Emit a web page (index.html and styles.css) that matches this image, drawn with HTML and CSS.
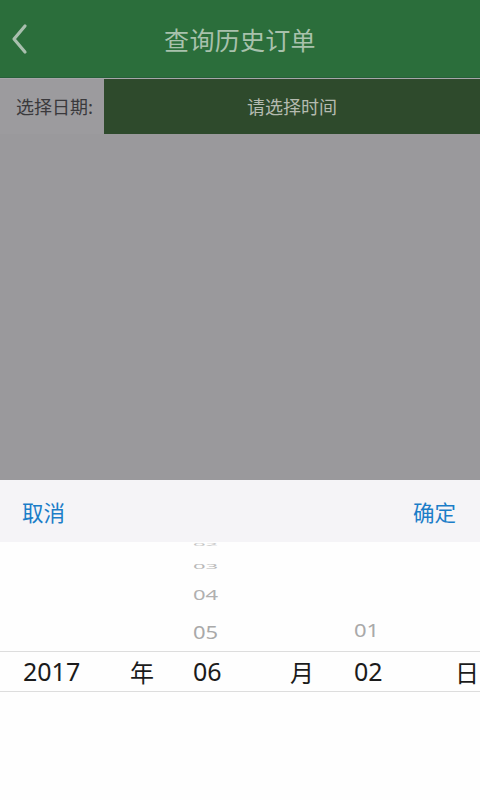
FILE: index.html
```html
<!DOCTYPE html>
<html lang="zh">
<head>
<meta charset="utf-8">
<title>查询历史订单</title>
<link rel="stylesheet" href="styles.css">
</head>
<body>
<div class="screen">
  <header class="topbar">
    <span class="back">
      <svg width="20" height="32" viewBox="0 0 20 32"><path d="M15 3 L4 16 L15 29" fill="none" stroke="#a9bfae" stroke-width="3.2" stroke-linecap="round" stroke-linejoin="round"/></svg>
    </span>
    <h1 class="title">查询历史订单</h1>
  </header>
  <div class="date-row">
    <div class="date-label">选择日期:</div>
    <div class="date-value">请选择时间</div>
  </div>
  <div class="dim"></div>
  <div class="picker">
    <div class="toolbar">
      <span class="tb-btn">取消</span>
      <span class="tb-btn">确定</span>
    </div>
    <div class="wheels">
      <div class="wheel-row upper">
        <div class="cell c1"></div>
        <div class="cell c2"></div>
        <div class="cell c3 stack">
          <span class="it it2">02</span>
          <span class="it it3">03</span>
          <span class="it it4">04</span>
          <span class="it it5">05</span>
        </div>
        <div class="cell c4"></div>
        <div class="cell c5 stack">
          <span class="it it5">01</span>
        </div>
        <div class="cell c6"></div>
      </div>
      <div class="wheel-row selected">
        <div class="cell c1">2017</div>
        <div class="cell c2 cjk">年</div>
        <div class="cell c3">06</div>
        <div class="cell c4 cjk">月</div>
        <div class="cell c5">02</div>
        <div class="cell c6 cjk">日</div>
      </div>
    </div>
  </div>
</div>
</body>
</html>
```
FILE: styles.css
```css
* { box-sizing: border-box; margin: 0; padding: 0; }
html, body { width: 480px; height: 800px; overflow: hidden; }
body {
  font-family: "Noto Sans", "Noto Sans CJK SC", sans-serif;
  background: #9a999c;
}
.screen { width: 480px; height: 800px; display: flex; flex-direction: column; }

.topbar {
  height: 78px;
  background: #2b6e3b;
  border-bottom: 1px solid #27603a;
  display: flex;
  align-items: center;
  justify-content: center;
  position: relative;
}
.back { position: absolute; left: 10px; top: 23px; width: 20px; height: 32px; }
.back svg { display: block; }
.title {
  font-family: "Noto Sans CJK SC", sans-serif;
  font-weight: 400;
  font-size: 25px;
  color: #a8c1ac;
  letter-spacing: 0.3px;
}

.date-row {
  height: 56px;
  display: flex;
  border-top: 1px solid #a7a6a9;
}
.date-label {
  width: 104px;
  background: #9c9b9e;
  color: #3a393c;
  font-family: "Noto Sans CJK SC", sans-serif;
  font-size: 18px;
  display: flex;
  align-items: center;
  padding-left: 16px;
  padding-bottom: 2px;
}
.date-value {
  flex: 1;
  background: #2e4a2c;
  color: #b5bbb0;
  font-family: "Noto Sans CJK SC", sans-serif;
  font-size: 18px;
  display: flex;
  align-items: center;
  justify-content: center;
  padding-bottom: 2px;
}

.dim { height: 346px; background: #9a999c; }

.picker { flex: 1; display: flex; flex-direction: column; background: #fefefe; }
.toolbar {
  height: 62px;
  background: #f5f4f7;
  display: flex;
  justify-content: space-between;
  align-items: center;
  padding: 0 24px 0 22px;
}
.tb-btn {
  font-family: "Noto Sans CJK SC", sans-serif;
  font-size: 21.5px;
  color: #1b7dc8;
}

.wheels { flex: 1; background: #fefefe; overflow: hidden; }
.wheel-row { display: grid; grid-template-columns: 120px 60px 100px 60px 100px 40px; }
.upper { height: 109px; }
.selected {
  height: 41px;
  border-top: 1px solid #dddddd;
  border-bottom: 1px solid #dddddd;
  align-items: center;
  font-size: 25px;
  color: #1b1b1b;
}
.c1 { padding-left: 23px; }
.c2 { padding-left: 10px; }
.c3 { padding-left: 13px; }
.c4 { padding-left: 10px; }
.c5 { padding-left: 14px; }
.c6 { padding-left: 15px; }
.cjk { font-family: "Noto Sans CJK SC", sans-serif; font-size: 24px; }
.selected .cell { line-height: 39px; padding-bottom: 1px; }

.stack {
  display: flex;
  flex-direction: column;
  justify-content: flex-end;
  overflow: hidden;
}
.it {
  display: block;
  font-size: 22px;
  line-height: 22px;
  color: #a9a9a9;
  transform-origin: left center;
  width: 40px;
}
.it5 { height: 38px; padding-top: 5px; transform: scaleY(0.85); }
.it4 { height: 32px; padding-top: 0; transform: translateY(-2px) scaleY(0.62); color: #b0b0b0; }
.it3 { height: 30px; padding-top: 0; transform: translateY(-3px) scaleY(0.36); color: #b8b8b8; }
.it2 { height: 14px; line-height: 14px; transform: translateY(-4px) scaleY(0.16); color: #c4c4c4; }
```
